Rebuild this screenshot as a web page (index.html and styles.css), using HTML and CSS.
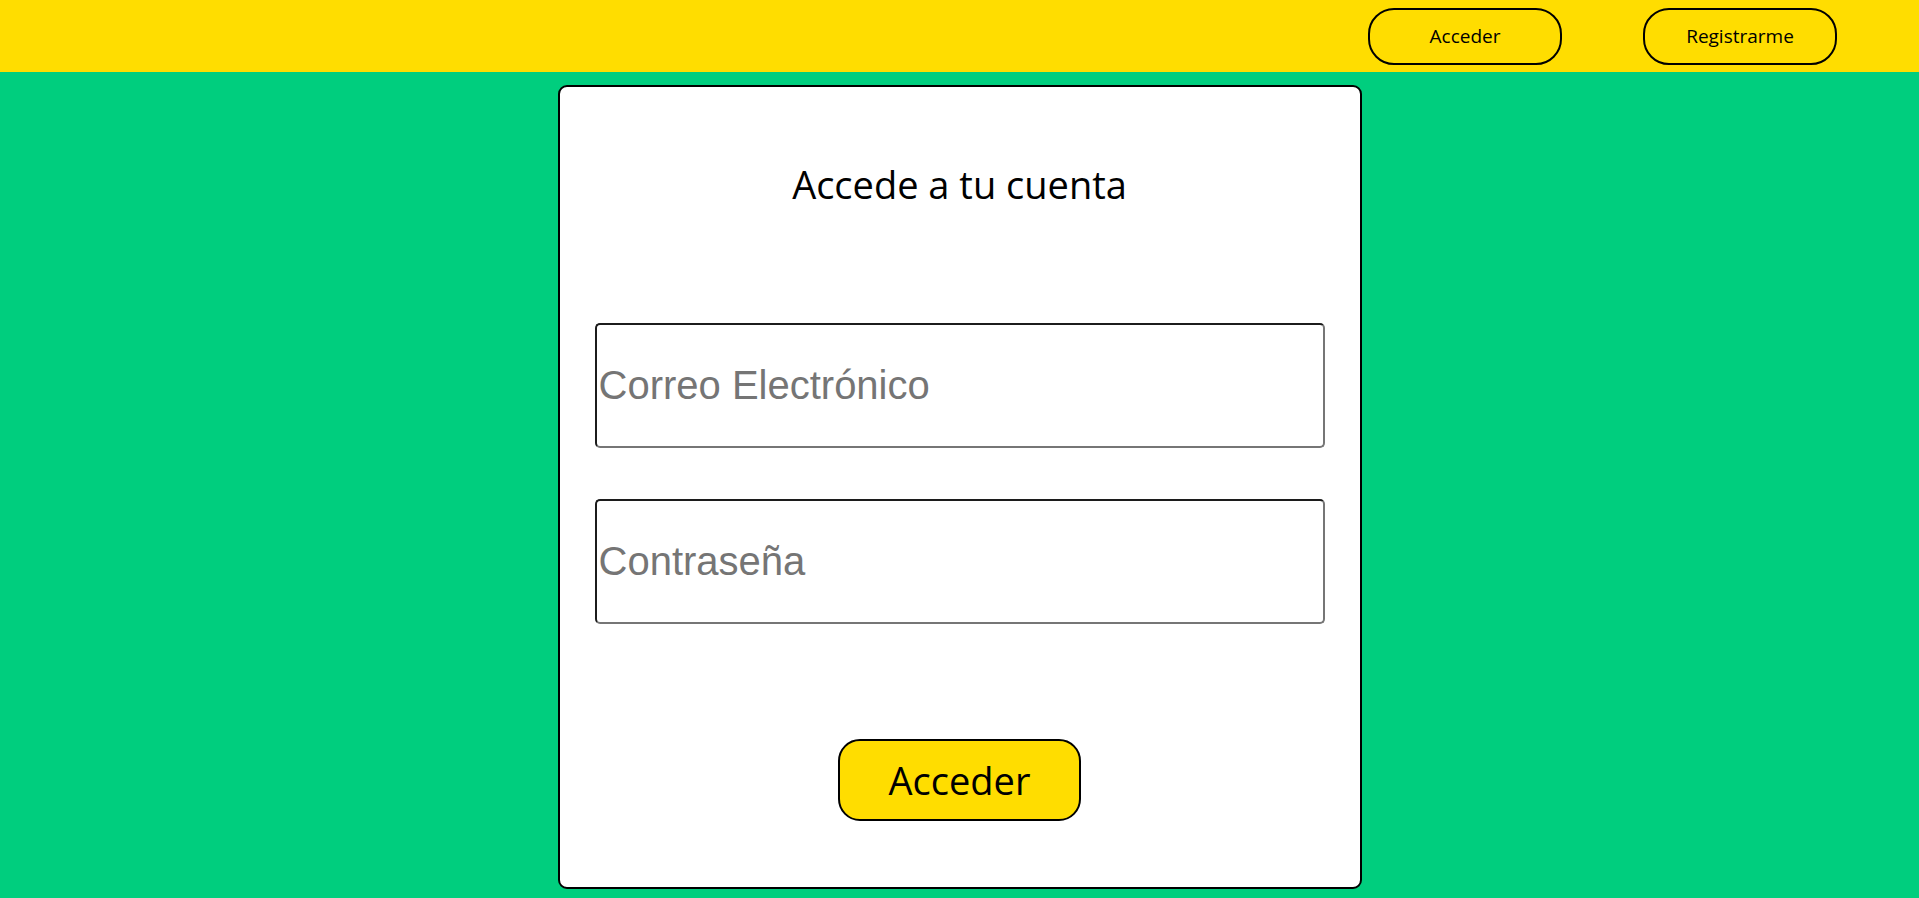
FILE: index.html
```html
<!DOCTYPE html>
<html lang="es">
<head>
<meta charset="utf-8">
<title>Acceder</title>
<link rel="stylesheet" href="styles.css">
</head>
<body>
<header class="topbar">
  <button class="nav-btn">Acceder</button>
  <button class="nav-btn">Registrarme</button>
</header>
<main class="page">
  <section class="card">
    <h1 class="card-title">Accede a tu cuenta</h1>
    <form class="login-form">
      <input class="field" type="email" placeholder="Correo Electrónico">
      <input class="field" type="password" placeholder="Contraseña">
      <button class="submit-btn" type="button">Acceder</button>
    </form>
  </section>
</main>
</body>
</html>
```
FILE: styles.css
```css
html, body {
  margin: 0;
  padding: 0;
}
body {
  background: #00ce7e;
  font-family: "Open Sans", "Noto Sans", sans-serif;
  height: 898px;
  overflow: hidden;
}
.topbar {
  height: 72px;
  background: #ffdd00;
  display: flex;
  justify-content: flex-end;
  align-items: center;
  gap: 81px;
  padding-right: 82px;
  box-sizing: border-box;
}
.nav-btn {
  width: 194px;
  height: 57px;
  background: #ffdd00;
  border: 2px solid #000;
  border-radius: 26px;
  font-family: "Open Sans", "Noto Sans", sans-serif;
  font-size: 19px;
  color: #000;
  padding: 0;
}
.page {
  padding-top: 13px;
}
.card {
  width: 804px;
  height: 804px;
  box-sizing: border-box;
  margin: 0 auto;
  background: #fff;
  border: 2px solid #000;
  border-radius: 9px;
  padding: 0 35px;
  display: flex;
  flex-direction: column;
}
.card-title {
  margin: 73px 0 0;
  height: 48px;
  line-height: 48px;
  font-size: 38px;
  font-weight: 400;
  text-align: center;
  color: #000;
}
.login-form {
  display: flex;
  flex-direction: column;
  margin-top: 115px;
}
.field {
  height: 125px;
  width: 100%;
  box-sizing: border-box;
  margin: 0 0 51px;
  border-width: 2px;
  border-style: solid;
  border-color: #1c1c1c #767676 #767676 #1c1c1c;
  border-radius: 5px;
  padding: 1px 2px;
  font-family: "Liberation Sans", Arial, sans-serif;
  font-size: 40px;
  color: #000;
  background: #fff;
}
.field:last-of-type {
  margin-bottom: 0;
}
.field::placeholder {
  color: #757575;
}
.submit-btn {
  margin: 115px auto 0;
  width: 243px;
  height: 82px;
  background: #ffdd00;
  border: 2px solid #000;
  border-radius: 22px;
  font-family: "Open Sans", "Noto Sans", sans-serif;
  font-size: 38px;
  color: #000;
  padding: 0;
}
```
